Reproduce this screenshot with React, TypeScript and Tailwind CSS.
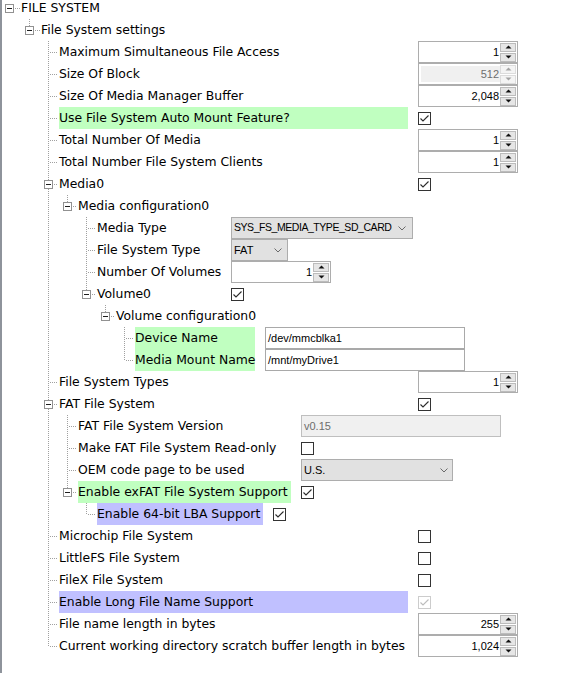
import React from "react";

type Ctrl =
  | { kind: "spin"; value: string; disabled?: boolean }
  | { kind: "check"; checked: boolean; disabled?: boolean }
  | { kind: "combo"; value: string; w: string; chev: string; tight?: boolean }
  | { kind: "text"; value: string; w: string; disabled?: boolean };

type Row = {
  label: string;
  depth: number;
  open?: boolean;
  cell?: string;
  hl?: "green" | "blue";
  ctrl?: Ctrl;
};

// tree geometry (px from the window's left edge)
const CENTER = [9, 29, 48, 67, 86, 105, 124];
const TEXT_X = [21, 41, 59, 78, 97, 116, 135];
const ROW_H = 22;

const rows: Row[] = [
  { label: "FILE SYSTEM", depth: 0, open: true },
  { label: "File System settings", depth: 1, open: true },
  { label: "Maximum Simultaneous File Access", depth: 2, cell: "w-[349px]", ctrl: { kind: "spin", value: "1" } },
  { label: "Size Of Block", depth: 2, cell: "w-[349px]", ctrl: { kind: "spin", value: "512", disabled: true } },
  { label: "Size Of Media Manager Buffer", depth: 2, cell: "w-[349px]", ctrl: { kind: "spin", value: "2,048" } },
  { label: "Use File System Auto Mount Feature?", depth: 2, cell: "w-[349px]", hl: "green", ctrl: { kind: "check", checked: true } },
  { label: "Total Number Of Media", depth: 2, cell: "w-[349px]", ctrl: { kind: "spin", value: "1" } },
  { label: "Total Number File System Clients", depth: 2, cell: "w-[349px]", ctrl: { kind: "spin", value: "1" } },
  { label: "Media0", depth: 2, open: true, cell: "w-[349px]", ctrl: { kind: "check", checked: true } },
  { label: "Media configuration0", depth: 3, open: true },
  { label: "Media Type", depth: 4, cell: "w-[124px]", ctrl: { kind: "combo", value: "SYS_FS_MEDIA_TYPE_SD_CARD", w: "w-[182px]", chev: "mr-[6px]", tight: true } },
  { label: "File System Type", depth: 4, cell: "w-[124px]", ctrl: { kind: "combo", value: "FAT", w: "w-[57px]", chev: "mr-[5px]" } },
  { label: "Number Of Volumes", depth: 4, cell: "w-[124px]", ctrl: { kind: "spin", value: "1" } },
  { label: "Volume0", depth: 4, open: true, cell: "w-[124px]", ctrl: { kind: "check", checked: true } },
  { label: "Volume configuration0", depth: 5, open: true },
  { label: "Device Name", depth: 6, cell: "w-[120px]", hl: "green", ctrl: { kind: "text", value: "/dev/mmcblka1", w: "w-[200px]" } },
  { label: "Media Mount Name", depth: 6, cell: "w-[120px]", hl: "green", ctrl: { kind: "text", value: "/mnt/myDrive1", w: "w-[200px]" } },
  { label: "File System Types", depth: 2, cell: "w-[349px]", ctrl: { kind: "spin", value: "1" } },
  { label: "FAT File System", depth: 2, open: true, cell: "w-[349px]", ctrl: { kind: "check", checked: true } },
  { label: "FAT File System Version", depth: 3, cell: "w-[213px]", ctrl: { kind: "text", value: "v0.15", w: "w-[200px]", disabled: true } },
  { label: "Make FAT File System Read-only", depth: 3, cell: "w-[213px]", ctrl: { kind: "check", checked: false } },
  { label: "OEM code page to be used", depth: 3, cell: "w-[213px]", ctrl: { kind: "combo", value: "U.S.", w: "w-[152px]", chev: "mr-[4px]" } },
  { label: "Enable exFAT File System Support", depth: 3, open: true, cell: "w-[213px]", hl: "green", ctrl: { kind: "check", checked: true } },
  { label: "Enable 64-bit LBA Support", depth: 4, cell: "w-[166px]", hl: "blue", ctrl: { kind: "check", checked: true } },
  { label: "Microchip File System", depth: 2, cell: "w-[349px]", ctrl: { kind: "check", checked: false } },
  { label: "LittleFS File System", depth: 2, cell: "w-[349px]", ctrl: { kind: "check", checked: false } },
  { label: "FileX File System", depth: 2, cell: "w-[349px]", ctrl: { kind: "check", checked: false } },
  { label: "Enable Long File Name Support", depth: 2, cell: "w-[349px]", hl: "blue", ctrl: { kind: "check", checked: true, disabled: true } },
  { label: "File name length in bytes", depth: 2, cell: "w-[349px]", ctrl: { kind: "spin", value: "255" } },
  { label: "Current working directory scratch buffer length in bytes", depth: 2, cell: "w-[349px]", ctrl: { kind: "spin", value: "1,024" } },
];

// does the line at level j go on below row i (a later sibling at that level follows)?
function continues(i: number, j: number) {
  for (let k = i + 1; k < rows.length; k++) {
    if (rows[k].depth < j) return false;
    if (rows[k].depth === j) return true;
  }
  return false;
}

function Gutter({ i }: { i: number }) {
  const d = rows[i].depth;
  const w = TEXT_X[d] - 2;
  const x = (v: number) => v - 2 + 0.5;
  const dot = { stroke: "#a0a0a0", strokeDasharray: "1 1", shapeRendering: "crispEdges" as const };
  const c = CENTER[d];
  const lines: React.ReactNode[] = [];
  for (let j = 1; j < d; j++) {
    if (continues(i, j)) lines.push(<line key={j} x1={x(CENTER[j])} y1={0} x2={x(CENTER[j])} y2={ROW_H} {...dot} />);
  }
  if (d >= 1) lines.push(<line key="own" x1={x(c)} y1={0} x2={x(c)} y2={continues(i, d) ? ROW_H : 11} {...dot} />);
  lines.push(<line key="h" x1={x(c) + 1} y1={11.5} x2={x(TEXT_X[d] - 2)} y2={11.5} {...dot} />);
  return (
    <svg width={w} height={ROW_H} className="shrink-0">
      {lines}
      {rows[i].open && (
        <g shapeRendering="crispEdges">
          <rect x={x(c - 4)} y={7.5} width={8} height={8} fill="#fff" stroke="#919191" />
          <line x1={x(c - 2) - 0.5} y1={11.5} x2={x(c + 3) - 0.5} y2={11.5} stroke="#1e1e1e" />
        </g>
      )}
    </svg>
  );
}

function Arrow({ up, muted }: { up?: boolean; muted?: boolean }) {
  return (
    <svg width="7" height="4" viewBox="0 0 7 4">
      <path d={up ? "M0.5 3.5 L3.5 0.5 L6.5 3.5 Z" : "M0.5 0.5 L3.5 3.5 L6.5 0.5 Z"} fill={muted ? "#a3a3a3" : "#111"} />
    </svg>
  );
}

function Spinner({ value, disabled }: { value: string; disabled?: boolean }) {
  return (
    <div className="flex h-[22px] w-[100px] shrink-0 border border-[#adadad] bg-white">
      <div className={`flex flex-1 items-center justify-end pr-[1px] ${disabled ? "m-[2px] mr-0 bg-[#f0f0f0] text-[#6d6d6d]" : "text-black"}`}>
        {value}
      </div>
      <div className="flex w-[17px] flex-col justify-center gap-[1px] pr-[1px]">
        <div className={`flex h-[9px] items-center justify-center border ${disabled ? "border-[#dcdcdc] bg-[#f4f4f4]" : "border-[#bcbcbc] bg-[#e6e6e6]"}`}>
          <Arrow up muted={disabled} />
        </div>
        <div className={`flex h-[9px] items-center justify-center border ${disabled ? "border-[#dcdcdc] bg-[#f4f4f4]" : "border-[#bcbcbc] bg-[#e6e6e6]"}`}>
          <Arrow muted={disabled} />
        </div>
      </div>
    </div>
  );
}

function Check({ checked, disabled }: { checked: boolean; disabled?: boolean }) {
  return (
    <div className={`flex h-[13px] w-[13px] shrink-0 items-center justify-center border bg-white ${disabled ? "border-[#cccccc]" : "border-[#333333]"}`}>
      {checked && (
        <svg width="11" height="11" viewBox="0 0 11 11">
          <path d="M1.5 5.5 L4 8 L9.5 2.5" fill="none" stroke={disabled ? "#bcbcbc" : "#2b2b2b"} strokeWidth="1.1" />
        </svg>
      )}
    </div>
  );
}

function Combo({ value, w, chev, tight }: { value: string; w: string; chev: string; tight?: boolean }) {
  return (
    <div className={`flex h-[22px] shrink-0 items-center justify-between border border-[#adadad] bg-[#e1e1e1] pl-[2px] text-black ${w}`}>
      <span className={`whitespace-nowrap ${tight ? "text-[10.5px] tracking-[-0.45px]" : ""}`}>{value}</span>
      <svg width="8" height="5" viewBox="0 0 8 5" className={chev}>
        <path d="M0.5 0.5 L4 4 L7.5 0.5" fill="none" stroke="#6a6a6a" strokeWidth="1" />
      </svg>
    </div>
  );
}

function TextBox({ value, w, disabled }: { value: string; w: string; disabled?: boolean }) {
  return (
    <div className={`flex h-[22px] shrink-0 items-center border pl-[2px] ${w} ${disabled ? "border-[#bfbfbf] bg-[#f0f0f0] text-[#6d6d6d]" : "border-[#a9a9a9] bg-white text-black"}`}>
      <span className="whitespace-nowrap">{value}</span>
    </div>
  );
}

function Control({ c }: { c: Ctrl }) {
  if (c.kind === "spin") return <Spinner value={c.value} disabled={c.disabled} />;
  if (c.kind === "check") return <Check checked={c.checked} disabled={c.disabled} />;
  if (c.kind === "combo") return <Combo value={c.value} w={c.w} chev={c.chev} tight={c.tight} />;
  return <TextBox value={c.value} w={c.w} disabled={c.disabled} />;
}

export default function App() {
  return (
    <div className="flex min-h-screen w-[587px] overflow-hidden bg-white">
      <div className="w-[2px] shrink-0 bg-[#8e939b]" />
      <div className="-mt-[3px] flex flex-col text-[12.4px] text-black" style={{ fontFamily: '"DejaVu Sans", sans-serif' }}>
        {rows.map((r, i) => (
          <div key={i} className="flex h-[22px] items-center">
            <Gutter i={i} />
            {r.ctrl ? (
              <>
                <div
                  className={`flex h-full shrink-0 items-center ${r.cell ?? ""} ${
                    r.hl === "green" ? "bg-[#c0ffc0]" : r.hl === "blue" ? "bg-[#c0c0ff]" : ""
                  }`}
                >
                  <span className="whitespace-nowrap">{r.label}</span>
                </div>
                <div
                  className="ml-[10px] flex h-full items-center text-[11px]"
                  style={{ fontFamily: '"Liberation Sans", Arial, sans-serif' }}
                >
                  <Control c={r.ctrl} />
                </div>
              </>
            ) : (
              <span className="whitespace-nowrap">{r.label}</span>
            )}
          </div>
        ))}
      </div>
    </div>
  );
}
